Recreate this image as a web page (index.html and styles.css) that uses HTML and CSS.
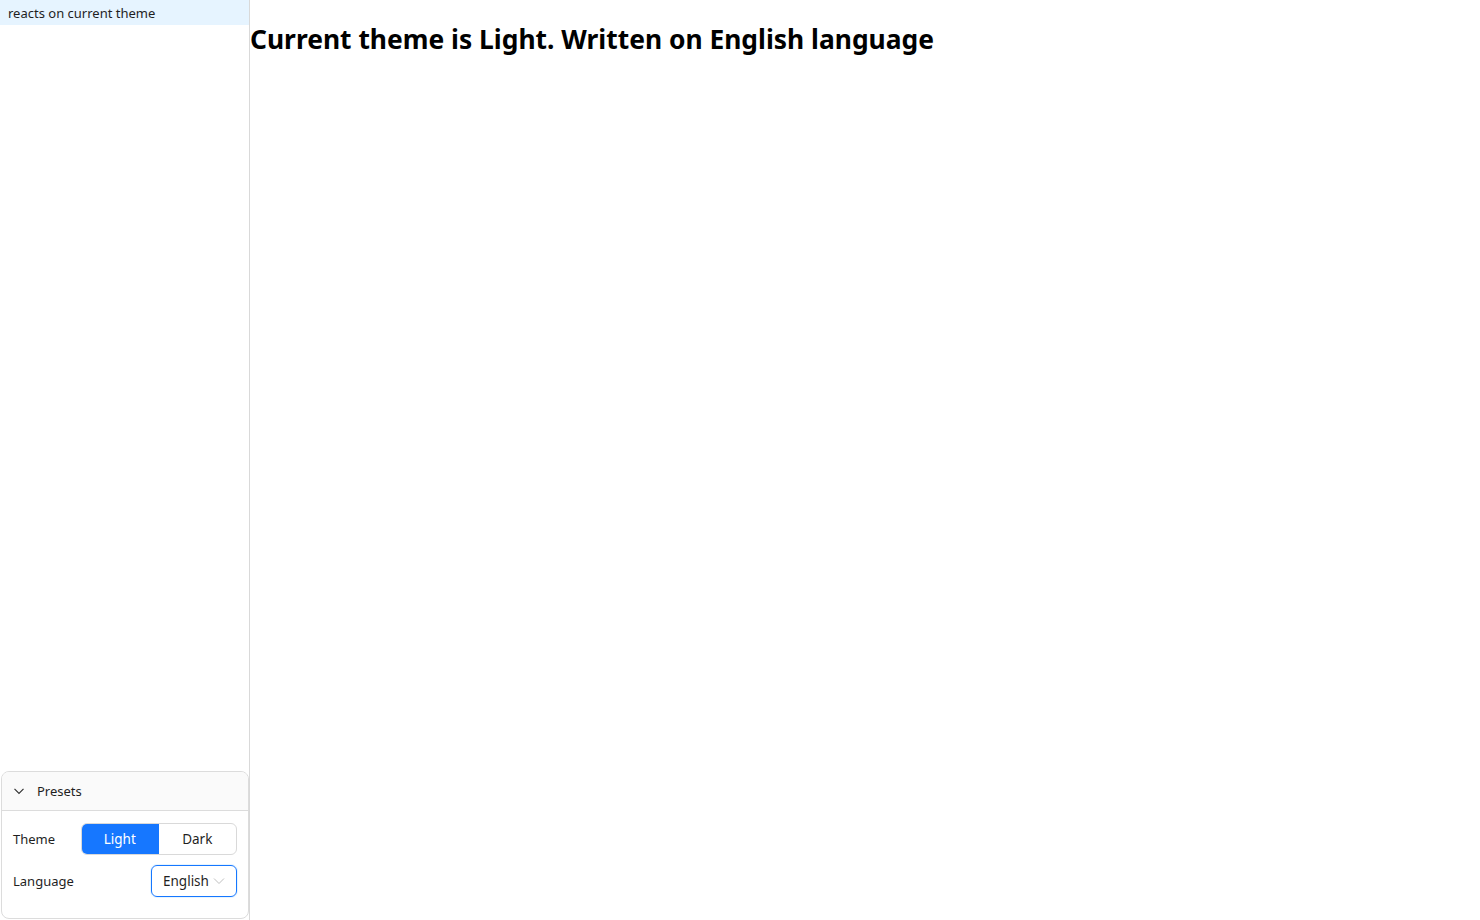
FILE: index.html
```html
<!DOCTYPE html>
<html>
<head>
<meta charset="utf-8">
<link rel="stylesheet" href="styles.css">
</head>
<body>
<div class="app">
  <aside class="sidebar">
    <div class="story-list">
      <div class="story active">reacts on current theme</div>
    </div>
    <div class="presets">
      <div class="presets-head">
        <svg class="chev" width="12" height="12" viewBox="0 0 12 12"><path d="M1.5 3.8 L6 8.3 L10.5 3.8" fill="none" stroke="#333" stroke-width="1.2"/></svg>
        <span>Presets</span>
      </div>
      <div class="presets-body">
        <div class="row">
          <span class="label">Theme</span>
          <div class="segmented">
            <span class="seg on">Light</span>
            <span class="seg">Dark</span>
          </div>
        </div>
        <div class="row">
          <span class="label">Language</span>
          <div class="select">
            <span>English</span>
            <svg width="12" height="12" viewBox="0 0 12 12"><path d="M1 3.5 L6 8.5 L11 3.5" fill="none" stroke="#bfbfbf" stroke-width="1"/></svg>
          </div>
        </div>
      </div>
    </div>
  </aside>
  <main class="main">
    <h1 class="title">Current theme is Light. Written on English language</h1>
  </main>
</div>
</body>
</html>
```
FILE: styles.css
```css
* { box-sizing: border-box; }
html, body { margin: 0; padding: 0; height: 100%; }
body { font-family: "Noto Sans", "Open Sans", sans-serif; color: #000; background: #fff; }
.app { display: flex; height: 920px; }
.sidebar { width: 250px; border-right: 1px solid #d9d9d9; display: flex; flex-direction: column; justify-content: space-between; }
.story { height: 25px; line-height: 25px; padding: 1px 0 0 8px; font-size: 13px; color: #1f1f1f; }
.story.active { background: #e6f4ff; }
.presets { margin: 0 0 1px 1px; border: 1px solid #dcdcdc; border-radius: 8px; overflow: hidden; font-size: 13px; color: #1f1f1f; }
.presets-head { height: 39px; background: #fafafa; border-bottom: 1px solid #dcdcdc; display: flex; align-items: center; padding-left: 11px; gap: 12px; }
.presets-body { padding: 12px 11px 21px 11px; display: flex; flex-direction: column; gap: 10px; }
.row { display: flex; align-items: center; justify-content: space-between; height: 32px; }
.label { color: #1f1f1f; }
.segmented { display: flex; width: 156px; height: 32px; border: 1px solid #d9d9d9; border-radius: 6px; overflow: hidden; }
.seg { flex: 1; display: flex; align-items: center; justify-content: center; font-size: 13.5px; color: #1f1f1f; }
.seg.on { background: #1677ff; color: #fff; margin: -1px 0 -1px -1px; }
.select { width: 86px; height: 32px; border: 1px solid #1677ff; border-radius: 6px; display: flex; align-items: center; padding: 0 11px 0 11px; justify-content: space-between; font-size: 13.5px; color: #1f1f1f; box-shadow: 0 0 0 1px rgba(5,145,255,0.1); }
.main { flex: 1; }
.title { margin: 19px 0 0 0; font-size: 26.4px; font-weight: 700; line-height: 40px; }
```
